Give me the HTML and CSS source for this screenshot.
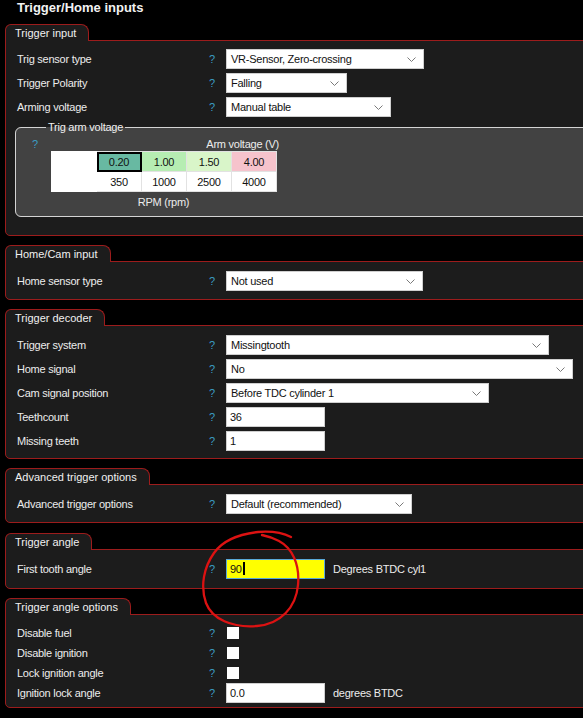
FILE: index.html
```html
<!DOCTYPE html>
<html>
<head>
  <title>Trigger/Home inputs</title>
  <link rel="stylesheet" href="styles.css">
</head>
<body>
  <div class="page">
    <h1 class="title">Trigger/Home inputs</h1>

    <section class="group">
      <div class="tab">Trigger input</div>
      <div class="panel input-panel">
        <div class="row">
          <span class="label">Trig sensor type</span><span class="help">?</span>
          <div class="select sensor"><span>VR-Sensor, Zero-crossing</span><svg class="chev" width="9" height="5" viewBox="0 0 9 5"><path d="M0.5 0.5 L4.5 4.5 L8.5 0.5"/></svg></div>
        </div>
        <div class="row">
          <span class="label">Trigger Polarity</span><span class="help">?</span>
          <div class="select polarity"><span>Falling</span><svg class="chev" width="9" height="5" viewBox="0 0 9 5"><path d="M0.5 0.5 L4.5 4.5 L8.5 0.5"/></svg></div>
        </div>
        <div class="row">
          <span class="label">Arming voltage</span><span class="help">?</span>
          <div class="select arming"><span>Manual table</span><svg class="chev" width="9" height="5" viewBox="0 0 9 5"><path d="M0.5 0.5 L4.5 4.5 L8.5 0.5"/></svg></div>
        </div>

        <fieldset class="arm">
          <legend>Trig arm voltage</legend>
          <div class="arm-head"><span class="help">?</span><span>Arm voltage (V)</span></div>
          <table class="map">
            <tr>
              <td class="blank" rowspan="2"></td>
              <td class="v1 selected">0.20</td>
              <td class="v2">1.00</td>
              <td class="v3">1.50</td>
              <td class="v4">4.00</td>
            </tr>
            <tr>
              <td>350</td>
              <td>1000</td>
              <td>2500</td>
              <td>4000</td>
            </tr>
          </table>
          <div class="axis">RPM (rpm)</div>
        </fieldset>
      </div>
    </section>

    <section class="group">
      <div class="tab">Home/Cam input</div>
      <div class="panel">
        <div class="row">
          <span class="label">Home sensor type</span><span class="help">?</span>
          <div class="select home"><span>Not used</span><svg class="chev" width="9" height="5" viewBox="0 0 9 5"><path d="M0.5 0.5 L4.5 4.5 L8.5 0.5"/></svg></div>
        </div>
      </div>
    </section>

    <section class="group">
      <div class="tab">Trigger decoder</div>
      <div class="panel decoder-panel">
        <div class="row">
          <span class="label">Trigger system</span><span class="help">?</span>
          <div class="select system"><span>Missingtooth</span><svg class="chev" width="9" height="5" viewBox="0 0 9 5"><path d="M0.5 0.5 L4.5 4.5 L8.5 0.5"/></svg></div>
        </div>
        <div class="row">
          <span class="label">Home signal</span><span class="help">?</span>
          <div class="select signal"><span>No</span><svg class="chev" width="9" height="5" viewBox="0 0 9 5"><path d="M0.5 0.5 L4.5 4.5 L8.5 0.5"/></svg></div>
        </div>
        <div class="row">
          <span class="label">Cam signal position</span><span class="help">?</span>
          <div class="select cam"><span>Before TDC cylinder 1</span><svg class="chev" width="9" height="5" viewBox="0 0 9 5"><path d="M0.5 0.5 L4.5 4.5 L8.5 0.5"/></svg></div>
        </div>
        <div class="row">
          <span class="label">Teethcount</span><span class="help">?</span>
          <div class="field">36</div>
        </div>
        <div class="row">
          <span class="label">Missing teeth</span><span class="help">?</span>
          <div class="field">1</div>
        </div>
      </div>
    </section>

    <section class="group advanced-group">
      <div class="tab">Advanced trigger options</div>
      <div class="panel advanced-panel">
        <div class="row">
          <span class="label">Advanced trigger options</span><span class="help">?</span>
          <div class="select advanced"><span>Default (recommended)</span><svg class="chev" width="9" height="5" viewBox="0 0 9 5"><path d="M0.5 0.5 L4.5 4.5 L8.5 0.5"/></svg></div>
        </div>
      </div>
    </section>

    <section class="group">
      <div class="tab">Trigger angle</div>
      <div class="panel angle-panel">
        <div class="row">
          <span class="label">First tooth angle</span><span class="help">?</span>
          <div class="field active">90<span class="caret"></span></div>
          <span class="unit">Degrees BTDC cyl1</span>
        </div>
      </div>
    </section>

    <section class="group">
      <div class="tab">Trigger angle options</div>
      <div class="panel options-panel">
        <div class="row">
          <span class="label">Disable fuel</span><span class="help">?</span>
          <span class="check"></span>
        </div>
        <div class="row">
          <span class="label">Disable ignition</span><span class="help">?</span>
          <span class="check"></span>
        </div>
        <div class="row">
          <span class="label">Lock ignition angle</span><span class="help">?</span>
          <span class="check"></span>
        </div>
        <div class="row">
          <span class="label">Ignition lock angle</span><span class="help">?</span>
          <div class="field">0.0</div>
          <span class="unit">degrees BTDC</span>
        </div>
      </div>
    </section>

    <!-- hand drawn marker over the trigger angle field -->
    <svg class="scribble" width="583" height="718" viewBox="0 0 583 718">
      <path d="M291 537 C283 533 270 531 258 532 C240 534 223 540 214 553 C204 567 200 586 206 603 C212 619 232 628 257 626 C281 624 296 607 298 585 C300 564 292 548 279 541 C273 538 267 536 262 535"/>
    </svg>
  </div>
</body>
</html>
```

FILE: styles.css
```css
html, body {
  margin: 0;
  background-color: #000;
  overflow: hidden;
}
body {
  font-family: 'Liberation Sans', Arial, sans-serif;
  font-size: 11px;
  letter-spacing: -0.25px;
  color: #ececec;
}
.page {
  position: relative;
  width: 583px;
  height: 718px;
}
.title {
  margin: 0;
  height: 24px;
  padding-left: 17px;
  font-size: 13px;
  font-weight: 700;
  line-height: 16px;
  letter-spacing: 0;
  color: #f2f2f2;
}
.group {
  margin-right: -30px;
  margin-left: 5px;
  margin-bottom: 9px;
}
.advanced-group {
  margin-bottom: 10px;
}
.tab {
  position: relative;
  z-index: 1;
  display: inline-block;
  height: 16px;
  line-height: 16px;
  padding: 0 12px 0 9px;
  margin-bottom: -1px;
  background-color: #1c1c1c;
  border: 1px solid #9c1c1c;
  border-bottom: none;
  border-radius: 6px 8px 0 0;
  letter-spacing: 0;
  color: #f0f0f0;
}
.panel {
  display: flex;
  flex-direction: column;
  gap: 4px;
  padding: 9px 0 8px 11px;
  background-color: #1c1c1c;
  border: 1px solid #9c1c1c;
  border-radius: 0 0 0 5px;
}
.input-panel {
  padding-top: 8px;
}
.decoder-panel {
  padding-bottom: 7px;
}
.advanced-panel {
  padding-bottom: 8px;
}
.angle-panel {
  padding-bottom: 9px;
}
.options-panel {
  gap: 0;
  padding-top: 8px;
  padding-bottom: 4px;
}
.row {
  display: flex;
  align-items: center;
  height: 20px;
}
.label {
  width: 189px;
}
.help {
  width: 12px;
  margin-right: 8px;
  text-align: center;
  color: #3b9cc4;
}
.select {
  box-sizing: border-box;
  height: 20px;
  display: flex;
  align-items: center;
  justify-content: space-between;
  padding: 0 7px 0 4px;
  background-color: #fff;
  border: 1px solid #cfcfcf;
  color: #111;
}
.chev path {
  fill: none;
  stroke: #7a7a7a;
  stroke-width: 1;
}
.sensor { width: 198px; }
.polarity { width: 121px; }
.arming { width: 165px; }
.home { width: 197px; }
.system { width: 323px; }
.signal { width: 347px; }
.cam { width: 263px; }
.advanced { width: 186px; }
.field {
  box-sizing: border-box;
  width: 99px;
  height: 20px;
  line-height: 18px;
  padding-left: 3px;
  background-color: #fff;
  border: 1px solid #cfcfcf;
  color: #111;
}
.field.active {
  background-color: #ffff00;
  border-color: #5aa8d8;
}
.caret {
  display: inline-block;
  width: 2px;
  height: 13px;
  margin-left: 1px;
  vertical-align: -2px;
  background-color: #000;
}
.unit {
  margin-left: 8px;
}
.check {
  width: 12px;
  height: 12px;
  margin-left: 1px;
  background-color: #fff;
}
.arm {
  margin: 0 0 10px -2px;
  padding: 0 0 4px 16px;
  min-width: 0;
  background-color: #424242;
  border: 1px solid #d4d4d4;
  border-radius: 6px;
}
.arm legend {
  margin-left: 14px;
  padding: 0 2px;
  line-height: 13px;
  color: #f0f0f0;
}
.arm-head {
  display: flex;
  justify-content: space-between;
  width: 247px;
  height: 14px;
  line-height: 14px;
  margin-top: 3px;
}
.arm-head .help {
  width: auto;
  text-align: left;
}
.map {
  margin-left: 19px;
  border-collapse: collapse;
  background-color: #fff;
  color: #111;
}
.map td {
  box-sizing: border-box;
  width: 45px;
  height: 20px;
  padding: 0;
  text-align: center;
  border: 1px solid #e2e2e2;
}
.map .blank {
  border-color: #fff;
}
.map .v1 { background-color: #68b9a2; }
.map .v2 { background-color: #b6edb2; }
.map .v3 { background-color: #d9f5c9; }
.map .v4 { background-color: #f6c3cc; }
.map .selected {
  outline: 2px solid #000;
  outline-offset: -2px;
}
.axis {
  width: 225px;
  margin-left: 19px;
  height: 20px;
  line-height: 20px;
  text-align: center;
}
.scribble {
  position: absolute;
  left: 0;
  top: 0;
  pointer-events: none;
}
.scribble path {
  fill: none;
  stroke: #dc1212;
  stroke-width: 2.3;
  stroke-linecap: round;
}
```
